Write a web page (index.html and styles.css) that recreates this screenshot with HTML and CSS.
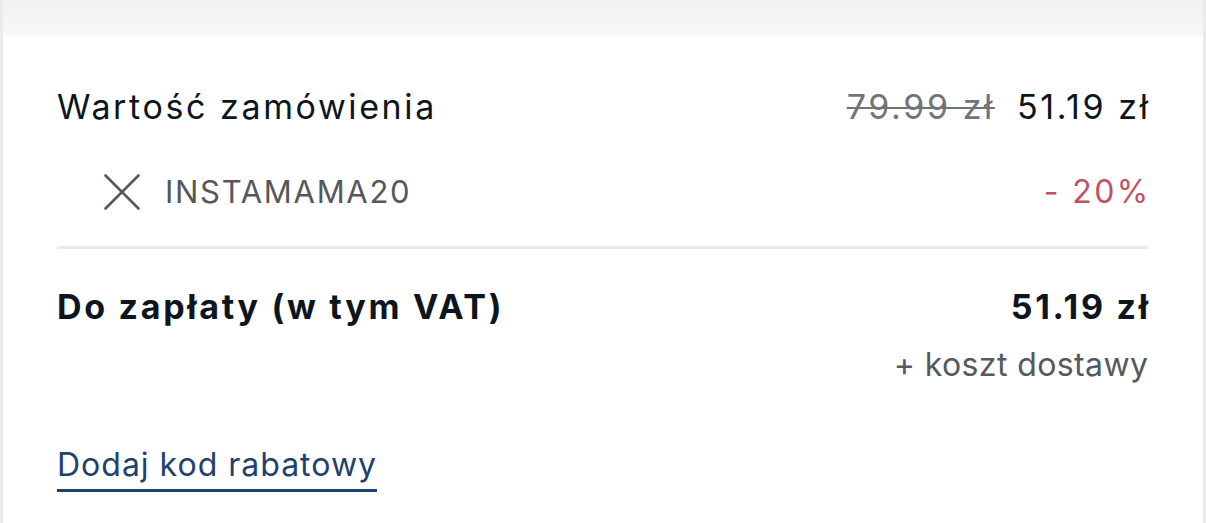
FILE: index.html
```html
<!DOCTYPE html>
<html lang="pl">
<head>
<meta charset="utf-8">
<link rel="stylesheet" href="styles.css">
</head>
<body>
<div class="page">
  <div class="topbar"></div>
  <div class="card">
    <div class="row row-value">
      <span class="label">Wartość zamówienia</span>
      <span class="prices end">
        <span class="old">79.99 zł</span>
        <span class="new">51.19 zł</span>
      </span>
    </div>
    <div class="row row-code">
      <span class="code">
        <svg class="remove" width="36" height="36" viewBox="0 0 36 36" aria-hidden="true">
          <path d="M1.5 1.5 L34.5 34.5 M34.5 1.5 L1.5 34.5" stroke="#55595f" stroke-width="2.6" stroke-linecap="round" fill="none"/>
        </svg>
        <span class="code-name">INSTAMAMA20</span>
      </span>
      <span class="discount end">- 20%</span>
    </div>
    <div class="divider"></div>
    <div class="row row-total">
      <span class="total-label">Do zapłaty (w tym VAT)</span>
      <span class="total-price end">51.19 zł</span>
    </div>
    <div class="shipping"><span class="end">+ koszt dostawy</span></div>
    <div class="link-row">
      <a class="add-code" href="#">Dodaj kod rabatowy</a>
    </div>
  </div>
</div>
</body>
</html>
```
FILE: styles.css
```css
html, body {
  margin: 0;
  padding: 0;
  height: 100%;
}
body {
  font-family: "Inter", "Lato", "Noto Sans", sans-serif;
  color: #0d1520;
  background: #ebebed;
}
.page {
  padding: 0 3px;
  height: 100%;
  box-sizing: border-box;
  display: flex;
  flex-direction: column;
}
.topbar {
  height: 35px;
  background: linear-gradient(#f2f2f2, #f7f7f7);
}
.card {
  flex: 1;
  background: #ffffff;
  padding: 50px 55px 0 54px;
}
.row {
  display: flex;
  justify-content: space-between;
  align-items: center;
  line-height: 44px;
}
.row-value {
  font-size: 34px;
  letter-spacing: 2.6px;
}
.end {
  margin-right: -2.6px;
}
.prices {
  display: flex;
  gap: 22px;
}
.old {
  color: #6e747a;
  text-decoration: line-through;
  text-decoration-thickness: 2px;
}
.row-code {
  margin-top: 41px;
  font-size: 31px;
}
.code {
  display: flex;
  align-items: center;
  gap: 25px;
  padding-left: 47px;
}
.remove {
  display: block;
}
.code-name {
  color: #54585e;
  letter-spacing: 1.7px;
}
.discount {
  color: #c2525f;
  font-size: 32px;
  letter-spacing: 2.4px;
}
.divider {
  margin-top: 32px;
  height: 3px;
  background: #e9eaec;
}
.row-total {
  margin-top: 36px;
  font-size: 34px;
  font-weight: 700;
  letter-spacing: 2.7px;
}
.shipping {
  margin-top: 16px;
  text-align: right;
  font-size: 32px;
  line-height: 40px;
  color: #55595f;
  letter-spacing: 0.4px;
}
.shipping .end {
  margin-right: -0.4px;
}
.link-row {
  margin-top: 60px;
  font-size: 32px;
  line-height: 40px;
}
.add-code {
  display: inline-block;
  color: #1f4170;
  text-decoration: none;
  border-bottom: 3px solid #1f4170;
  line-height: 40px;
  padding-bottom: 4px;
  letter-spacing: 1px;
}
```
